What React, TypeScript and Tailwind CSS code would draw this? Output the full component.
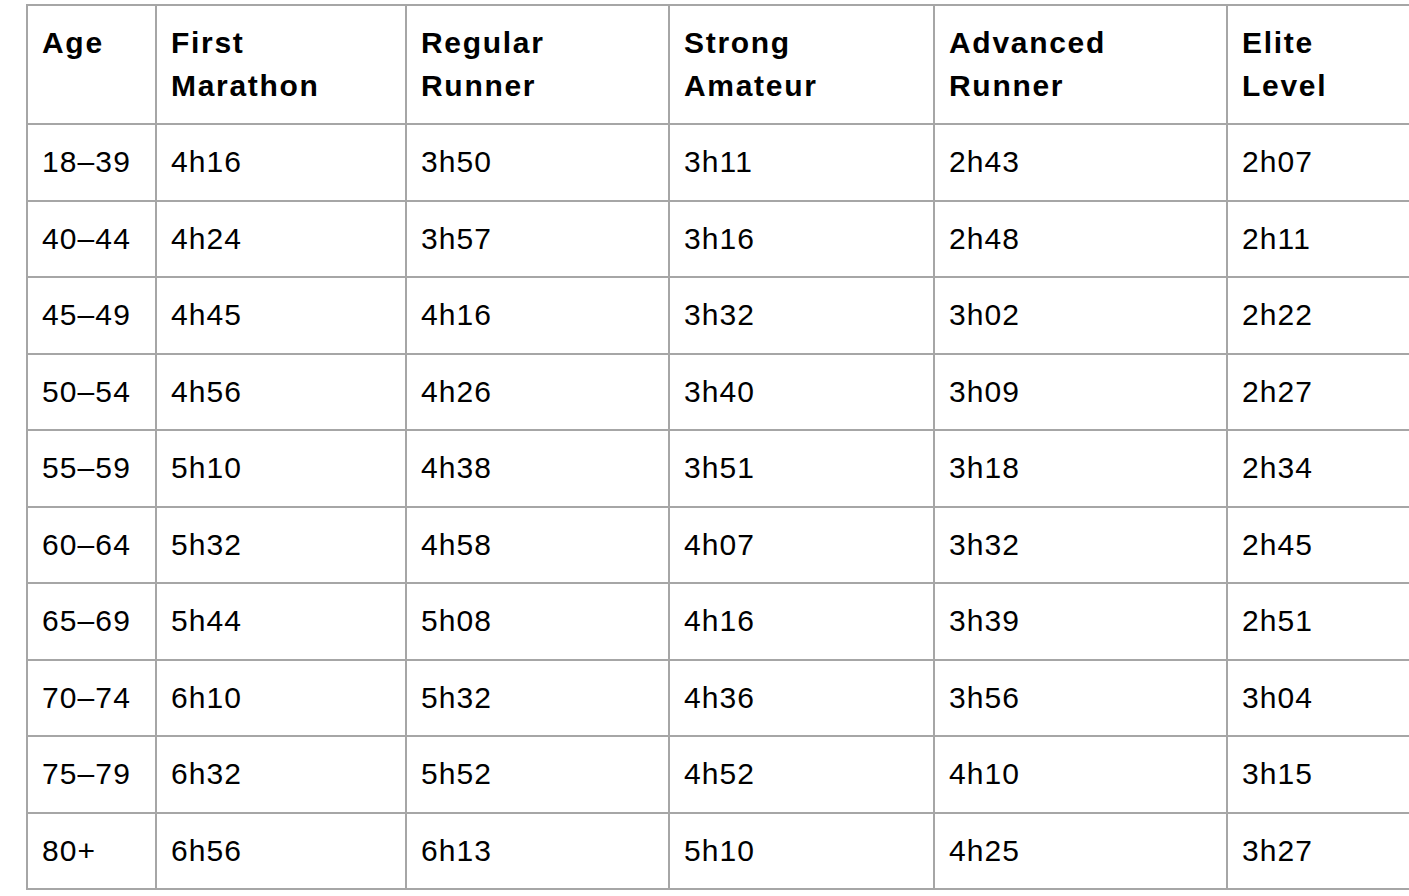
const HEADERS = [
  ["Age"],
  ["First", "Marathon"],
  ["Regular", "Runner"],
  ["Strong", "Amateur"],
  ["Advanced", "Runner"],
  ["Elite", "Level"],
];

const ROWS = [
  ["18–39", "4h16", "3h50", "3h11", "2h43", "2h07"],
  ["40–44", "4h24", "3h57", "3h16", "2h48", "2h11"],
  ["45–49", "4h45", "4h16", "3h32", "3h02", "2h22"],
  ["50–54", "4h56", "4h26", "3h40", "3h09", "2h27"],
  ["55–59", "5h10", "4h38", "3h51", "3h18", "2h34"],
  ["60–64", "5h32", "4h58", "4h07", "3h32", "2h45"],
  ["65–69", "5h44", "5h08", "4h16", "3h39", "2h51"],
  ["70–74", "6h10", "5h32", "4h36", "3h56", "3h04"],
  ["75–79", "6h32", "5h52", "4h52", "4h10", "3h15"],
  ["80+", "6h56", "6h13", "5h10", "4h25", "3h27"],
];

export default function App() {
  return (
    <div className="w-[1409px] h-[896px] overflow-hidden bg-white">
      <div
        className="ml-[26px] mt-[4px] w-[1480px] grid grid-cols-[129px_250px_263px_265px_293px_280px] border-l-2 border-t-2 border-[#a6a6a6] text-black text-[30px] leading-[42.5px]"
        style={{ fontFamily: '"Liberation Sans", Arial, sans-serif' }}
      >
        {/* header row */}
        {HEADERS.map((lines, i) => (
          <div
            key={i}
            className="border-r-2 border-b-2 border-[#a6a6a6] pl-[14px] py-[16px] font-bold tracking-[1.7px] h-[119px]"
          >
            {lines.map((l) => (
              <div key={l}>{l}</div>
            ))}
          </div>
        ))}

        {/* data rows */}
        {ROWS.map((row) =>
          row.map((cell, j) => (
            <div
              key={row[0] + j}
              className="border-r-2 border-b-2 border-[#a6a6a6] pl-[14px] py-[16px] tracking-[1.1px] h-[76.5px]"
            >
              {cell}
            </div>
          ))
        )}
      </div>
    </div>
  );
}
